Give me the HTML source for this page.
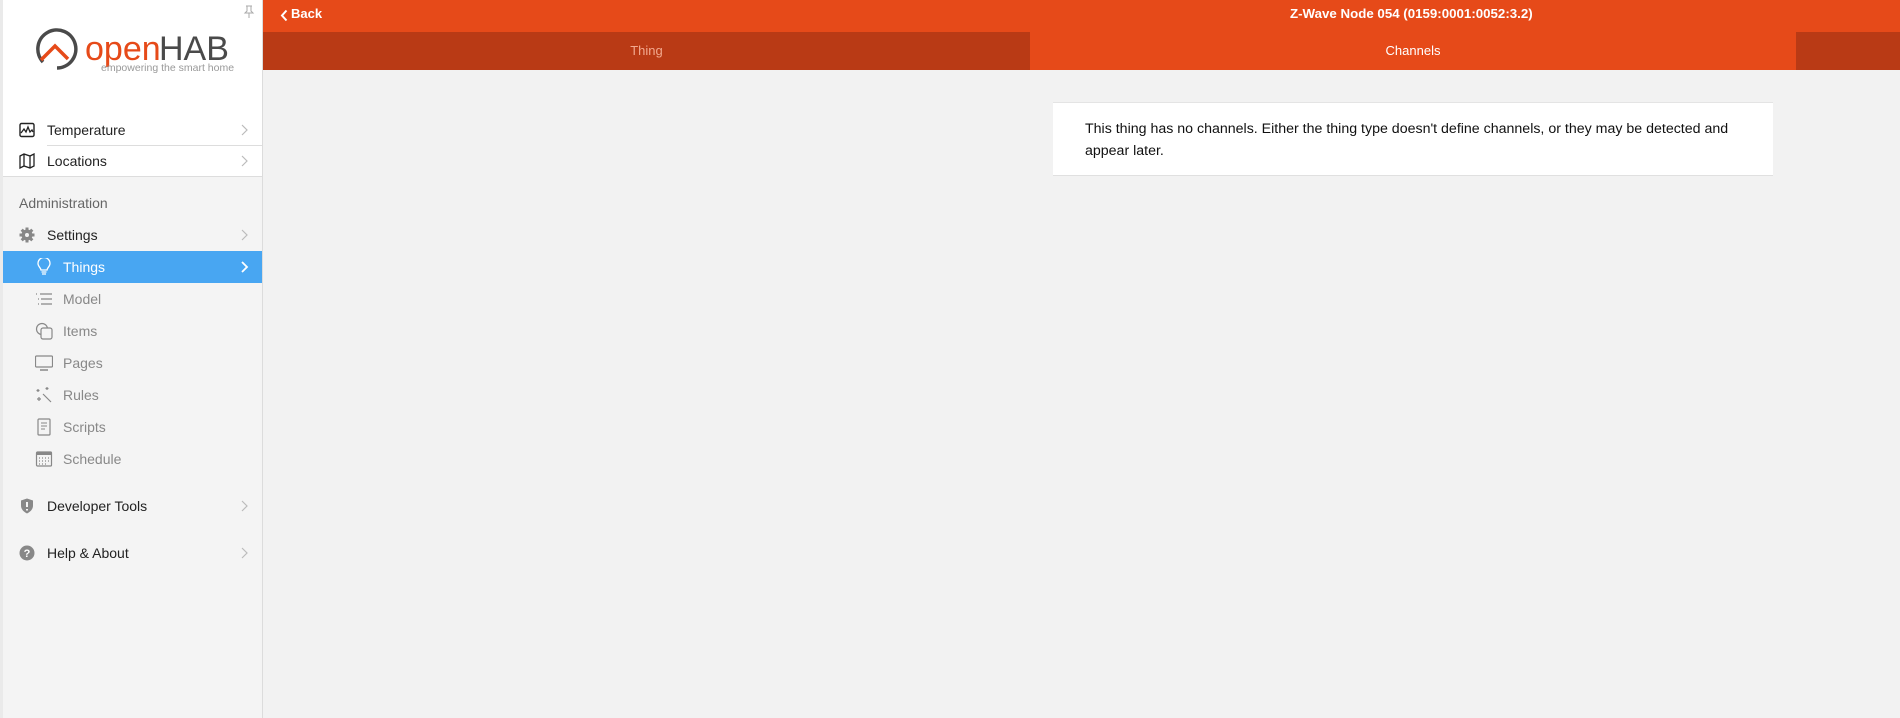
<!DOCTYPE html>
<html><head><meta charset="utf-8"><style>
*{box-sizing:border-box;margin:0;padding:0}
body{width:1900px;height:718px;overflow:hidden;background:#f2f2f2;font-family:"Segoe UI","Liberation Sans",sans-serif;position:relative}
.sb{position:absolute;left:0;top:0;width:263px;height:718px;background:#f4f4f4;border-right:1px solid #dcdcdc;border-left:3px solid #eaeaea}
.top{position:absolute;left:0;top:0;width:259px;height:115px;background:#fff;border-bottom:1px solid #ddd}
.row{position:absolute;left:0;width:259px;height:32px;font-size:14px;color:#222}
.row .t{position:absolute;left:44px;top:50%;transform:translateY(-50%)}
.row .i{position:absolute;left:16px;top:50%;transform:translateY(-50%);width:16px;height:16px}
.row .c{position:absolute;right:13px;top:50%;transform:translateY(-50%);width:9px;height:12px}
.sub .t{left:60px;color:#888}
.sub .i{left:32px;width:18px;height:18px}
.nav{position:absolute;left:263px;top:0;width:1637px;height:32px;background:#e64a19}
.tabs{position:absolute;left:263px;top:32px;width:1637px;height:38px;background:#b93a15}
</style></head><body>
<div class="sb">
 <div class="top">
  <svg style="position:absolute;left:240px;top:5px" width="12" height="14" viewBox="0 0 12 14"><path d="M3 1h6M4 1v5l-2 2h8l-2-2V1M6 8v5" fill="none" stroke="#aaa" stroke-width="1"/></svg>
  <svg style="position:absolute;left:30px;top:28px" width="205" height="50" viewBox="0 0 205 50">
   <path d="M10 34 A19 19 0 1 1 24 40" fill="none" stroke="#4a4a4a" stroke-width="3.5"/>
   <path d="M8 32 L22 18 L35 31" fill="none" stroke="#e64a19" stroke-width="3.5"/>
   <text x="52" y="32" font-family="Liberation Sans,sans-serif" font-size="34" fill="#e64a19">open</text>
   <text x="126" y="32" font-family="Liberation Sans,sans-serif" font-size="34" fill="#4a4a4a">HAB</text>
   <text x="68" y="43" font-family="Liberation Sans,sans-serif" font-size="10.5" fill="#999">empowering the smart home</text>
  </svg>
 </div>
 <div class="row" style="top:114px;background:#fff"><svg class="i" viewBox="0 0 16 16"><rect x="1" y="1.5" width="14" height="13" rx="1.5" fill="none" stroke="#222" stroke-width="1.4"/><path d="M2 11l3-4 2 3 2-5 2 5 2-2 1 2" fill="none" stroke="#222" stroke-width="1.3"/></svg><span class="t">Temperature</span><svg class="c" viewBox="0 0 9 12"><path d="M2 1l5 5-5 5" fill="none" stroke="#bbb" stroke-width="1.2"/></svg></div>
 <div style="position:absolute;left:44px;top:145px;width:215px;height:1px;background:#ddd"></div>
 <div class="row" style="top:146px;background:#fff;height:31px;border-bottom:1px solid #ddd"><svg class="i" viewBox="0 0 16 16"><path d="M1 3l4-2 6 2 4-2v12l-4 2-6-2-4 2zM5 1v12M11 3v12" fill="none" stroke="#222" stroke-width="1.3"/></svg><span class="t">Locations</span><svg class="c" viewBox="0 0 9 12"><path d="M2 1l5 5-5 5" fill="none" stroke="#bbb" stroke-width="1.2"/></svg></div>
 <div style="position:absolute;left:16px;top:195px;font-size:14px;color:#666">Administration</div>
 <div class="row" style="top:219px"><svg class="i" viewBox="0 0 16 16"><circle cx="8" cy="8" r="5.5" fill="#888"/><path d="M8 0.5v15M0.5 8h15M2.7 2.7l10.6 10.6M13.3 2.7L2.7 13.3" stroke="#888" stroke-width="3"/><circle cx="8" cy="8" r="2" fill="#f4f4f4"/></svg><span class="t">Settings</span><svg class="c" viewBox="0 0 9 12"><path d="M2 1l5 5-5 5" fill="none" stroke="#bbb" stroke-width="1.2"/></svg></div>
 <div class="row sub" style="top:251px;background:#48a6f2;color:#fff"><svg class="i" viewBox="0 0 18 18"><path d="M6 12c0-2-3-3.5-3-6.5a6 6 0 0 1 12 0c0 3-3 4.5-3 6.5zM6.5 14h5M7 16h4" fill="none" stroke="#fff" stroke-width="1.3"/></svg><span class="t" style="color:#fff">Things</span><svg class="c" viewBox="0 0 9 12"><path d="M2 1l5 5-5 5" fill="none" stroke="#fff" stroke-width="1.8"/></svg></div>
 <div class="row sub" style="top:283px"><svg class="i" viewBox="0 0 18 18"><path d="M1 4h1M5 4h12M3 9h1M6 9h11M3 14h1M6 14h11" stroke="#888" stroke-width="1.3"/></svg><span class="t">Model</span></div>
 <div class="row sub" style="top:315px"><svg class="i" viewBox="0 0 18 18"><circle cx="7" cy="7" r="5.5" fill="none" stroke="#888" stroke-width="1.2"/><rect x="6" y="6" width="11" height="11" rx="2" fill="#f4f4f4" stroke="#888" stroke-width="1.2"/></svg><span class="t">Items</span></div>
 <div class="row sub" style="top:347px"><svg class="i" viewBox="0 0 18 18"><rect x="0.5" y="2" width="17" height="11" rx="1" fill="none" stroke="#888" stroke-width="1.2"/><path d="M5 16h8" stroke="#888" stroke-width="1.5"/></svg><span class="t">Pages</span></div>
 <div class="row sub" style="top:379px"><svg class="i" viewBox="0 0 18 18"><path d="M8 8l8 8M3 3v3M1.5 4.5h3M12 1v3M10.5 2.5h3M4 11v4M2 13h4" stroke="#888" stroke-width="1.2"/></svg><span class="t">Rules</span></div>
 <div class="row sub" style="top:411px"><svg class="i" viewBox="0 0 18 18"><rect x="3" y="1" width="12" height="16" rx="1" fill="none" stroke="#888" stroke-width="1.2"/><path d="M6 5h6M6 8h6M6 11h4" stroke="#888" stroke-width="1.1"/></svg><span class="t">Scripts</span></div>
 <div class="row sub" style="top:443px"><svg class="i" viewBox="0 0 18 18"><rect x="1.5" y="2" width="15" height="14" rx="1" fill="none" stroke="#888" stroke-width="1.2"/><rect x="1.5" y="2" width="15" height="3" fill="#888"/><path d="M4 8h1M7 8h1M10 8h1M13 8h1M4 11h1M7 11h1M10 11h1M13 11h1M4 14h1M7 14h1M10 14h1" stroke="#888" stroke-width="1.2"/></svg><span class="t">Schedule</span></div>
 <div class="row" style="top:490px"><svg class="i" viewBox="0 0 16 16"><path d="M8 0.5l6 2v5c0 4-3 6.5-6 8-3-1.5-6-4-6-8v-5z" fill="#888"/><path d="M8 4v5M8 11v1.5" stroke="#fff" stroke-width="1.8"/></svg><span class="t">Developer Tools</span><svg class="c" viewBox="0 0 9 12"><path d="M2 1l5 5-5 5" fill="none" stroke="#bbb" stroke-width="1.2"/></svg></div>
 <div class="row" style="top:537px"><svg class="i" viewBox="0 0 16 16"><circle cx="8" cy="8" r="7.5" fill="#888"/><text x="8" y="12" text-anchor="middle" font-family="Liberation Sans,sans-serif" font-size="11" font-weight="bold" fill="#fff">?</text></svg><span class="t">Help &amp; About</span><svg class="c" viewBox="0 0 9 12"><path d="M2 1l5 5-5 5" fill="none" stroke="#bbb" stroke-width="1.2"/></svg></div>
</div>
<div class="nav">
 <svg style="position:absolute;left:17px;top:9px" width="8" height="13" viewBox="0 0 8 13"><path d="M6.5 1.5L2 6.5l4.5 5" fill="none" stroke="#fff" stroke-width="2"/></svg>
 <span style="position:absolute;left:28px;top:6px;font-size:13px;font-weight:bold;color:#fff">Back</span>
 <span style="position:absolute;left:1027px;top:6px;font-size:13.3px;font-weight:bold;color:#fff">Z-Wave Node 054 (0159:0001:0052:3.2)</span>
</div>
<div class="tabs">
 <div style="position:absolute;left:0;top:0;width:767px;height:38px;color:#f2a98f;font-size:13px;text-align:center;line-height:38px">Thing</div>
 <div style="position:absolute;left:767px;top:0;width:766px;height:38px;background:#e64a19;color:#fff;font-size:13px;text-align:center;line-height:38px">Channels</div>
</div>
<div style="position:absolute;left:1053px;top:102px;width:720px;height:74px;background:#fff;border-top:1px solid #e4e4e4;border-bottom:1px solid #e0e0e0"></div>
<div style="position:absolute;left:1085px;top:118px;width:650px;font-size:14.2px;line-height:22px;color:#111">This thing has no channels. Either the thing type doesn't define channels, or they may be detected and appear later.</div>
</body></html>
